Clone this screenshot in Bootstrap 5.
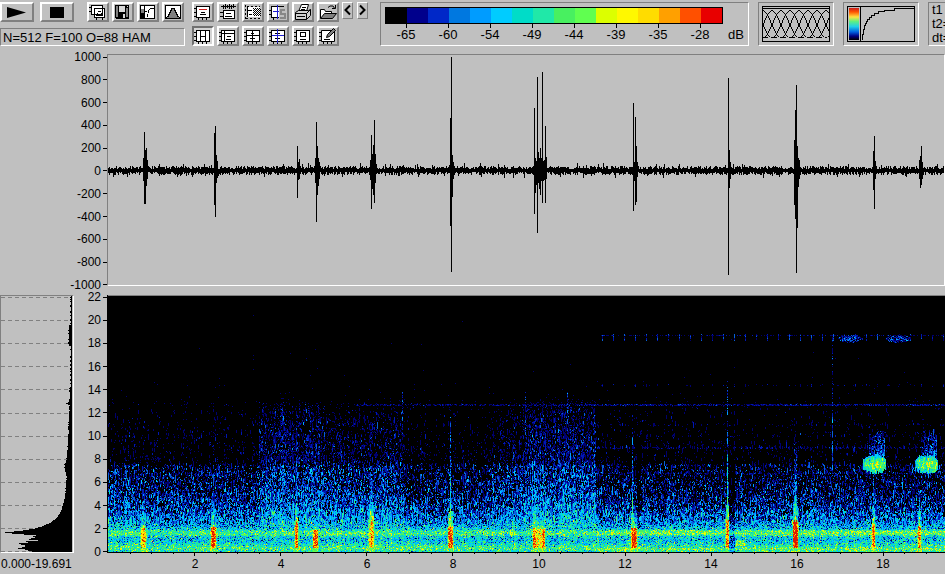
<!DOCTYPE html>
<html lang="en">
<head>
<meta charset="utf-8">
<meta name="viewport" content="width=device-width, initial-scale=1">
<title>Spectrogram</title>
<link href="https://cdn.jsdelivr.net/npm/bootstrap@5.3.0/dist/css/bootstrap.min.css" rel="stylesheet">
<style>
body{background:#c0c0c0;color:#000;font:12px/12px "Liberation Sans",Arial,sans-serif;overflow:hidden}
svg,canvas{display:block}
.tools{height:51px;padding-top:2px}
.bevel{padding:0;border:2px solid;border-color:#fff #808080 #808080 #fff;border-radius:0;background:#c0c0c0;width:22px;height:20px;line-height:0;box-shadow:none}
.bevel.wide{width:34px}
.bevel.slim{width:11px;height:17px;border-width:1px}
.bevel.down{border-color:#707070 #fff #fff #707070;background:#d4d4d4}
.g3{gap:3px}
.g6{gap:6px}
.sunk{border:1px solid;border-color:#808080 #fff #fff #808080}
.status{width:185px;height:18px;font-size:13px;line-height:17px;padding-left:2px;margin-top:6px}
.leftTools{width:185px}
.fileTools{margin-left:7px}
.iconTools{margin-left:7px}
.dbPanel{width:369px;height:44px;margin-left:12px;padding:4px 0 0 4px}
.dbBar{width:338px;height:17px;border:1px solid #000}
.dbBar span{flex:1}
.dbScale{font-size:13px;line-height:14px}
.dbScale span{width:42px;text-align:center}
.dbScale span::before{content:"";display:block;width:1px;height:4px;margin:0 auto;background:#000}
.dbScale .unit{width:23px;text-align:right}
.dbScale .unit::before{background:none}
.viewPanel{width:76px;height:44px;margin-left:9px;padding:3px}
.times{height:44px;margin-left:9px;width:90px;padding:0 3px;font-size:13px;line-height:14px;white-space:nowrap;overflow:hidden}
.axisY{text-align:right}
.axisY span{display:flex;justify-content:flex-end;align-items:center;gap:2px}
.axisY span::after{content:"";width:4px;height:1px;background:#000}
.ampAxis{width:107px;height:240px}
.freqAxis{width:33px;height:267px}
.wave{margin-top:3px;height:232px;min-width:0}
.side{width:74px;margin-top:4px}
.side .sunk{height:258px}
.spec{margin-top:4px;min-width:0}
.timeAxis{padding-left:45px}
.timeAxis span{flex:0 0 86px;text-align:center}
.sideText{margin-top:5px;padding-left:1px}
canvas{width:100%}
</style>
<script src="https://cdn.jsdelivr.net/npm/bootstrap@5.3.0/dist/js/bootstrap.bundle.min.js"></script>
</head>
<body>
<svg width="0" height="0" class="position-absolute" aria-hidden="true">
<defs>
<symbol id="frame" viewBox="2 2 18 16"><path fill="#fff" d="M5 5h12v10H5z"/><path fill="none" stroke="#000" d="M4.5 4.5h13v11h-13zM2 6.5h2M2 10.5h2M2 14.5h2M6.5 16v2M10.5 16v2M14.5 16v2"/></symbol>
</defs>
</svg>
<header class="tools d-flex align-items-start overflow-hidden">
  <div class="leftTools flex-shrink-0">
    <div class="d-flex g6">
      <button class="bevel wide" aria-label="Play"><svg width="30" height="16"><path d="M5 3L24 8.500 5 14z"/></svg></button>
      <button class="bevel wide" aria-label="Stop"><svg width="30" height="16"><path d="M8 3h14v11H8z"/></svg></button>
      <div class="d-flex g3 fileTools">
        <button class="bevel" aria-label="Copy"><svg width="18" height="16" viewBox="2 2 18 16" shape-rendering="crispEdges"><path fill="#fff" stroke="#000" d="M4.500 3.500h11v9h-11zM7.500 6.500h10v9h-10z"/><path fill="none" stroke="#000" d="M2 5.500h2M2 9.500h2M5 12.500h2M9.500 16v2M15.500 16v2M9 13.500h7M10 11.500h1M11 9.500h3M14 11.500h1"/></svg></button>
        <button class="bevel" aria-label="Save"><svg width="18" height="16" viewBox="2 2 18 16" shape-rendering="crispEdges"><path d="M3 3h14v14H4l-1-1z"/><path fill="#808080" d="M4 4h2v11H4zM14 6h2v9h-2z"/><path fill="#d8d8d8" d="M7 4h6v6H7zM11 12h2v4h-2zM15 4h1v1h-1z"/></svg></button>
        <button class="bevel" aria-label="Gain curve"><svg width="18" height="16" viewBox="2 2 18 16" shape-rendering="crispEdges"><path fill="#fff" stroke="#000" d="M3.500 3.500h14v13h-14z"/><path fill="#808080" d="M4 7h3v4H4z"/><path d="M4 11h3v5H4z"/><path fill="none" stroke="#000" d="M7.500 4v12M10.500 15v-3M11.500 11v-3M12 7.500h1M13 6.500h4M8 9.500h2"/></svg></button>
        <button class="bevel" aria-label="Window function"><svg width="18" height="16" viewBox="2 2 18 16" shape-rendering="crispEdges"><path fill="#fff" stroke="#000" d="M3.500 3.500h15v13h-15z"/><path fill="#808080" stroke="#000" d="M4 15.500l2-1 2-4 2-4h2l2 4 2 4 2 1v1H4z"/></svg></button>
      </div>
    </div>
    <div class="status sunk text-nowrap">N=512 F=100 O=88 HAM</div>
  </div>
  <div class="iconTools flex-shrink-0">
    <div class="d-flex g3">
      <button class="bevel" aria-label="Spectrum window"><svg width="18" height="16" viewBox="2 2 18 16" shape-rendering="crispEdges"><use href="#frame" x="2" y="2" width="18" height="16"/><path stroke="#d02020" d="M7 7.500h8"/><path stroke="#000" d="M9 10.500h4M8 12.500h6"/></svg></button>
      <button class="bevel" aria-label="Waveform window"><svg width="18" height="16" viewBox="2 2 18 16" shape-rendering="crispEdges"><path fill="#fff" stroke="#000" d="M6.500 8.500h11v8h-11z"/><path stroke="#000" d="M4 4.500h15M6.500 3v4M8.500 2v5M10.500 3v3M12.500 2v5M14.500 3v4M16.500 2v4M3 10.500h3M3 14.500h3M9 11.500h5M8 14.500h7"/></svg></button>
      <button class="bevel" aria-label="Select area"><svg width="18" height="16" viewBox="2 2 18 16" shape-rendering="crispEdges"><path fill="#fff" d="M5 5h13v10H5z"/><path fill="none" stroke="#000" stroke-dasharray="2 2" d="M3.500 3v14M5 4.500h13M4 16.500h16"/><path fill="none" stroke="#000" d="M6 8.500h4M5.500 5v10M7 12.500h3"/><path stroke="#000" stroke-dasharray="1 1" d="M11 6.500h8M12 7.500h8M11 8.500h8M12 9.500h8M11 10.500h8M12 11.500h8M11 12.500h8M12 13.500h8"/></svg></button>
      <button class="bevel" aria-label="Split"><svg width="18" height="16" viewBox="2 2 18 16" shape-rendering="crispEdges"><path fill="#fff" d="M5 5h7v10H5z"/><path fill="none" stroke="#000" d="M17 4.500H4.500v11H12M2 8.500h2M2 12.500h2M6.500 16v2"/><path stroke="#2020d0" d="M10.500 3v14M6 9.500h6"/><path fill="none" stroke="#888" stroke-width="2" d="M18 8h-4v4h4v4h-5"/></svg></button>
      <button class="bevel" aria-label="Print"><svg width="18" height="16" viewBox="2 2 18 16"><path fill="#fff" stroke="#000" d="M6.500 9.500l3-7h7l-2 7z"/><path stroke="#000" d="M10 5.500h4M9 7.500h4"/><path fill="#d0d0d0" stroke="#000" d="M3.500 10.500l3-2h10l2-1v6l-4 4h-11z"/><path fill="none" stroke="#000" d="M3 11.500h11.500v6M14.500 11.500l4-4M5 14.500h8"/></svg></button>
      <button class="bevel" aria-label="Open"><svg width="18" height="16" viewBox="2 2 18 16"><path fill="#fff" stroke="#000" d="M3.500 16V7.500h4l1 2h6v2"/><path fill="#808080" stroke="#000" d="M3.500 16.500l4-5h12l-4 5z"/><path fill="none" stroke="#000" d="M11 5.500l2-1.500h3l2 3M15 6.500h3.500V3"/></svg></button>
      <div class="d-flex">
        <button class="bevel slim" aria-label="Previous"><svg width="9" height="15"><path fill="none" stroke="#000" stroke-width="2" d="M7 2.500L2.500 7 7 11.500"/></svg></button>
        <button class="bevel slim ms-1" aria-label="Next"><svg width="9" height="15"><path fill="none" stroke="#000" stroke-width="2" d="M2 2.500L6.500 7 2 11.500"/></svg></button>
      </div>
    </div>
    <div class="d-flex g3 mt-1">
      <button class="bevel down" aria-label="Time markers"><svg width="18" height="16" viewBox="2 2 18 16" shape-rendering="crispEdges"><use href="#frame" x="2" y="2" width="18" height="16"/><path stroke="#000" d="M8.500 4v12M13.500 4v12M9 10.500h4"/></svg></button>
      <button class="bevel" aria-label="Frequency markers"><svg width="18" height="16" viewBox="2 2 18 16" shape-rendering="crispEdges"><use href="#frame" x="2" y="2" width="18" height="16"/><path stroke="#000" d="M5 7.500h12M7.500 5v10M10 10.500h4M9 13.500h5"/></svg></button>
      <button class="bevel" aria-label="Crosshair"><svg width="18" height="16" viewBox="2 2 18 16" shape-rendering="crispEdges"><use href="#frame" x="2" y="2" width="18" height="16"/><path stroke="#000" d="M5 9.500h12M10.500 4v12M9 7.500h3M8 12.500h5"/></svg></button>
      <button class="bevel" aria-label="Harmonic cursor"><svg width="18" height="16" viewBox="2 2 18 16" shape-rendering="crispEdges"><use href="#frame" x="2" y="2" width="18" height="16"/><path stroke="#2020d0" d="M5 9.500h12M10.500 3v14"/><path stroke="#000" d="M8 7.500h2M11 7.500h2M8 12.500h2M11 12.500h2"/></svg></button>
      <button class="bevel" aria-label="Zoom box"><svg width="18" height="16" viewBox="2 2 18 16" shape-rendering="crispEdges"><use href="#frame" x="2" y="2" width="18" height="16"/><path fill="none" stroke="#000" d="M8.500 6.500h5v4h-5zM8 13.500h6"/></svg></button>
      <button class="bevel" aria-label="Edit"><svg width="18" height="16" viewBox="2 2 18 16"><use href="#frame" x="2" y="2" width="18" height="16"/><path fill="#808080" stroke="#000" d="M9.500 11.500l1-3 6-6 2 2-6 6z"/><path stroke="#000" d="M7 13.500h6"/></svg></button>
    </div>
  </div>
  <section class="dbPanel sunk flex-shrink-0" aria-label="Colour scale">
    <div class="dbBar d-flex" id="dbBar"></div>
    <div class="dbScale d-flex"><span>-65</span><span>-60</span><span>-54</span><span>-49</span><span>-44</span><span>-39</span><span>-35</span><span>-28</span><span class="unit">dB</span></div>
  </section>
  <div class="viewPanel sunk flex-shrink-0"><svg width="68" height="36" id="overlap" shape-rendering="crispEdges" role="img" aria-label="Window overlap"></svg></div>
  <div class="viewPanel sunk flex-shrink-0"><svg width="68" height="36" shape-rendering="crispEdges" role="img" aria-label="Colour curve">
    <defs><linearGradient id="rainbow" x2="0" y2="1"><stop stop-color="#c82020"/><stop offset=".12" stop-color="#ff5000"/><stop offset=".28" stop-color="#ffe040"/><stop offset=".42" stop-color="#60f080"/><stop offset=".58" stop-color="#20d0e8"/><stop offset=".75" stop-color="#0060e0"/><stop offset=".88" stop-color="#000080"/><stop offset="1"/></linearGradient></defs>
    <path fill="none" stroke="#000" d="M.5.500h67v35H.5zM13.500 1v34"/><path fill="url(#rainbow)" d="M2 2h10v32H2z"/>
    <path fill="none" stroke="#000" d="M15.500 34v-6h1v-5h1v-4h1v-2h1v-2h1v-2h2v-2h2v-2h3v-2h4v-2h6v-1h10v-2h21v-1"/></svg></div>
  <div class="times sunk flex-shrink-0">t1 =<br>t2=<br>dt=</div>
</header>
<main>
  <section class="d-flex" aria-label="Waveform">
    <div class="ampAxis axisY d-flex flex-column justify-content-between flex-shrink-0"><span>1000</span><span>800</span><span>600</span><span>400</span><span>200</span><span>0</span><span>-200</span><span>-400</span><span>-600</span><span>-800</span><span>-1000</span></div>
    <div class="wave sunk flex-grow-1"><canvas id="wave" height="230"></canvas></div>
  </section>
  <section class="d-flex" aria-label="Spectrogram">
    <div class="side flex-shrink-0">
      <div class="sunk"><svg width="72" height="256" id="profile" shape-rendering="crispEdges"></svg></div>
      <div class="sideText">0.000-19.691</div>
    </div>
    <div class="freqAxis axisY d-flex flex-column justify-content-between flex-shrink-0"><span>22</span><span>20</span><span>18</span><span>16</span><span>14</span><span>12</span><span>10</span><span>8</span><span>6</span><span>4</span><span>2</span><span>0</span></div>
    <div class="spec flex-grow-1">
      <canvas id="spec" height="263"></canvas>
      <div class="timeAxis d-flex overflow-hidden"><span>2</span><span>4</span><span>6</span><span>8</span><span>10</span><span>12</span><span>14</span><span>16</span><span>18</span></div>
    </div>
  </section>
</main>
<script>
const palette=['#000000','#00008c','#0028c8','#0078e0','#009cff','#00ccff','#00dcc8','#20e8a8','#48f060','#60ff50','#dcff00','#fff800','#ffdc00','#ffa000','#ff5000','#e80000'];
const rgb=palette.map(c=>[1,3,5].map(i=>parseInt(c.substr(i,2),16)));
rgb[1]=[0,0,110];rgb[2]=[0,24,180];rgb[3]=[8,96,216];rgb[15]=[220,24,0];
const bar=document.getElementById('dbBar');
palette.forEach(c=>{const s=document.createElement('span');s.style.background=c;bar.append(s)});

let seed=7;
const rnd=()=>{seed=(seed*1664525+1013904223)>>>0;return seed/4294967296};
const gauss=()=>rnd()+rnd()+rnd()+rnd()-2;

// Overlapping analysis windows
let d='M.5.500h67v35H.5zM1 2.500h66';
for(let k=-4;k<9;k++){
  const x=k*9;
  for(let i=0;i<=27;i++){
    const a=Math.round(14*Math.acos(1-i/13.5)/Math.PI*1.3),py=4+i;
    for(const px of [x+a,x+37-a])if(px>0&&px<67)d+=`M${px} ${py}.500h1`;
  }
  if(x>=0&&x<63)d+=`M${x+1} 31.500h5`;
}
document.getElementById('overlap').innerHTML=`<path fill="none" stroke="#000" d="${d}"/>`;

// Average spectrum, width of the black area at each row
const pts=[[0,1],[28,1],[29,3],[48,3],[50,1],[90,1],[92,2],[105,2],[107,5],[109,2],[130,3],[150,4],[164,5],[168,7],[172,7],[180,5],[195,6],[205,8],[215,11],[221,15],[226,21],[230,30],[232,37],[234,49],[236,67],[237,60],[238,48],[239,36],[240,38],[242,41],[244,37],[246,48],[248,52],[249,44],[251,48],[252,53],[254,44],[255,40],[256,40]];
let pr='';
for(let k=0;k<12;k++)pr+=`<path stroke="#808080" stroke-dasharray="4 3" d="M0 ${Math.round(1+k*23.1)}.500h70"/>`;
let pb='';
for(let y=0;y<256;y++){
  let i=0;while(pts[i+1][0]<y)i++;
  const [a,b]=[pts[i],pts[i+1]];
  const w=Math.round(a[1]+(b[1]-a[1])*(y-a[0])/(b[0]-a[0])+(y>239?gauss()*4:y<200?rnd()*.8:0));
  pb+=`M${71-w} ${y}.500h${w}`;
}
document.getElementById('profile').innerHTML=pr+`<path stroke="#000" d="${pb}"/>`;

// Waveform: [x, height above, depth below] of each peak, relative to the zero line
const peaks=[[35,12,10],[36,38,33],[37,20,33],[38,22,15],[39,10,8],[106,37,34],[107,44,46],[108,15,12],[109,9,7],[189,24,27],[190,8,9],[191,11,8],[207,12,12],[208,48,51],[209,24,24],[210,12,15],[211,8,8],[262,10,9],[263,35,38],[264,16,18],[265,25,24],[266,50,32],[267,16,12],[342,52,55],[343,113,101],[344,15,26],[345,8,8],[426,62,43],[427,12,22],[428,9,14],[429,93,62],[430,18,12],[431,12,18],[432,22,24],[433,12,10],[434,98,32],[435,9,10],[436,10,9],[437,44,32],[438,13,8],[525,67,40],[526,8,10],[527,53,34],[528,24,31],[529,8,6],[620,92,104],[621,20,17],[622,8,8],[686,30,34],[687,60,48],[688,85,102],[689,24,57],[690,12,16],[691,10,8],[765,19,19],[766,34,38],[767,9,8],[811,10,8],[812,14,17],[813,24,14],[814,8,8]];
function drawWave(){
  const c=document.getElementById('wave');c.width=c.clientWidth;
  const g=c.getContext('2d');seed=11;
  for(let x=0;x<c.width;x++){
    let u=1+Math.round(rnd()*3),l=1+Math.round(rnd()*3);
    if(rnd()<.06)u+=3;if(rnd()<.06)l+=3;
    for(const p of peaks)if(p[0]===x){u=Math.max(u,p[1]);l=Math.max(l,p[2])}
    g.fillRect(x,115-u,1,u+l+1);
  }
}

// Spectrogram
const curve=[[0,6],[.15,6.6],[.3,7.8],[.6,6.6],[1,5],[1.35,5.4],[1.5,7.4],[1.8,7.4],[2,5.6],[2.3,4.2],[3,3],[4,1.9],[5,1.1],[6,.5],[7.5,0],[7.6,-1.3],[10,-1.6],[13,-2.3],[14,-3],[23,-4]];
const lerp=(t,v)=>{let i=0;while(i<t.length-2&&t[i+1][0]<v)i++;const a=t[i],b=t[i+1];return a[1]+(b[1]-a[1])*(v-a[0])/(b[0]-a[0])};
// [x, half width, top of click in kHz, top of hot core, core level]
const clicks=[[36,2,5.2,2.1,14],[106,2,5.4,2.2,16],[189,1,7,2.7,15],[208,2,3,1.9,16],[264,2,7.4,2.7,14],[343,2,12,2.2,16],[427,1,8,2.1,15],[430,1,4,2,13],[433,1,4,2,13],[436,1,4,2,15],[525,1,12,2.1,15],[527,2,4,2.1,16],[620,1,15,2.7,15],[688,2,9.5,2.6,18],[766,1,6.700,2.5,15],[812,1,6.700,2.3,14]];
const bands=[[18.7,.2],[12.7,.9],[9,.5],[6.8,1],[10,-.4],[14.4,-.6],[11,-.4]];
function level(x,f,y,colNoise){
  let v=lerp(curve,f);
  if(x>151&&x<297&&f<13.5){const w=x<215?1:.6;v+=f>2.2?w*(f>7.5?1.9-(f-7.5)*.06:1.3):0;if(f>12)v-=(f-12)*.8}
  if(x>375&&x<489&&f<13.5){const w=Math.min(1,(x-375)/55);v+=f>2.2?w*(f>7.5?1.95-(f-7.5)*.06:1.6):0;if(f>12)v-=(f-12)*.8}
  if(x<25&&f>2&&f<7)v+=.7;
  if((x>297&&x<380||x>489)&&f>3.5&&f<7.5)v-=.3;
  if(x>489&&(f<.4||f>1.5&&f<1.95))v+=.9;
  let n=gauss()*(f>7.6?2.2:3.2);
  if(f>7.6&&f<13&&x<489)v+=.2;
  v+=n+colNoise*.5;
  if(f>1.9&&f<7.6&&rnd()<.12)v-=2;
  for(const [bf,a] of bands){
    const s=x>489||bf===12.7&&x>245;
    if(s&&Math.abs(f-bf)<.06)v=Math.max(v,a-(x<489?.5:0)+gauss()*1.5);
  }
  if(x>489&&(Math.abs(f-18.5)<.3||Math.abs(f-14.4)<.15)&&x%11<1)v=Math.max(v,rnd()*3.4-(f<15?.8:0));
  for(const cx of [743,791]){const r=((x-cx)/13)**2+((f-18.4)/.32)**2;if(r<1)v=Math.max(v,gauss()*2.4+1.9-r)}
  for(const [cx,hw,top,core,lv] of clicks){
    const dx=Math.abs(x-cx);
    if(dx>hw+1||f>top)continue;
    if(f>.4&&f<core){if(dx<=hw)v=Math.max(v,lv-.4-dx*1.1-Math.abs(f-1.2)*1.2+gauss()*3.2);else v=Math.max(v,7+gauss()*3)}
    else if(f<=.4)v=Math.max(v,8+gauss()*3);
    else{const k=1-(f-core)/(top-core);if(dx<=(f<core+1.3?hw:hw>1&&top<10?1:0))v=Math.max(v,.8+8.500*k*k-dx+gauss()*3.2)}
  }
  if(x===725&&f>7&&f<18.8)v=Math.max(v,(f<12?2:.6)+gauss()*2.5);
  if((x===295||x===418||x===460)&&f>10&&f<13.8)v=Math.max(v,1.2+gauss()*2.5);
  if(x>621&&x<628&&f<8)v-=f<1.5?3.500:2;
  if(x>529&&x<534&&f>2&&f<10)v-=1.5;
  if(x>628&&x<638&&f>.6&&f<1.1)v+=3;
  for(const cx of [767,819]){
    const r=((x-cx)/12)**4+((f-7.55)/.75)**2;
    if(r<1)v=Math.max(v,8.5-r*4+(x>cx?1:0)+gauss()*2.6);
    else if(x>cx-6&&x<cx+11&&f>8&&f<10.5)v=Math.max(v,2.8-(f-8)*1.1-Math.max(0,cx+4-x)*.15+gauss()*3);
  }
  return v;
}
function drawSpec(){
  const c=document.getElementById('spec');c.width=c.clientWidth;
  const g=c.getContext('2d'),w=c.width,h=258;seed=99;
  const im=g.createImageData(w,h);
  for(let x=0;x<w;x++){
    const cn=gauss();let prev=0;
    for(let y=h-1;y>=0;y--){
      const f=(257-y)/11.6;
      let v=level(x,f,y,cn);
      if(f>2.5&&f<12.5&&rnd()<.35)v=prev;
      prev=v;
      const p=rgb[Math.max(0,Math.min(15,Math.round(v)))],o=(y*w+x)*4;
      im.data[o]=p[0];im.data[o+1]=p[1];im.data[o+2]=p[2];im.data[o+3]=255;
    }
  }
  g.putImageData(im,0,0);
  g.fillStyle='#808080';g.fillRect(0,0,w,1);
  g.fillStyle='#000';g.fillRect(0,0,1,h);g.fillRect(0,h-1,w,1);
  for(let k=1;k*21.525<w;k++)g.fillRect(Math.round(k*21.525)+1,h,1,k%4?1:3);
}
function draw(){drawWave();drawSpec()}
draw();
addEventListener('resize',draw);
</script>
</body>
</html>
